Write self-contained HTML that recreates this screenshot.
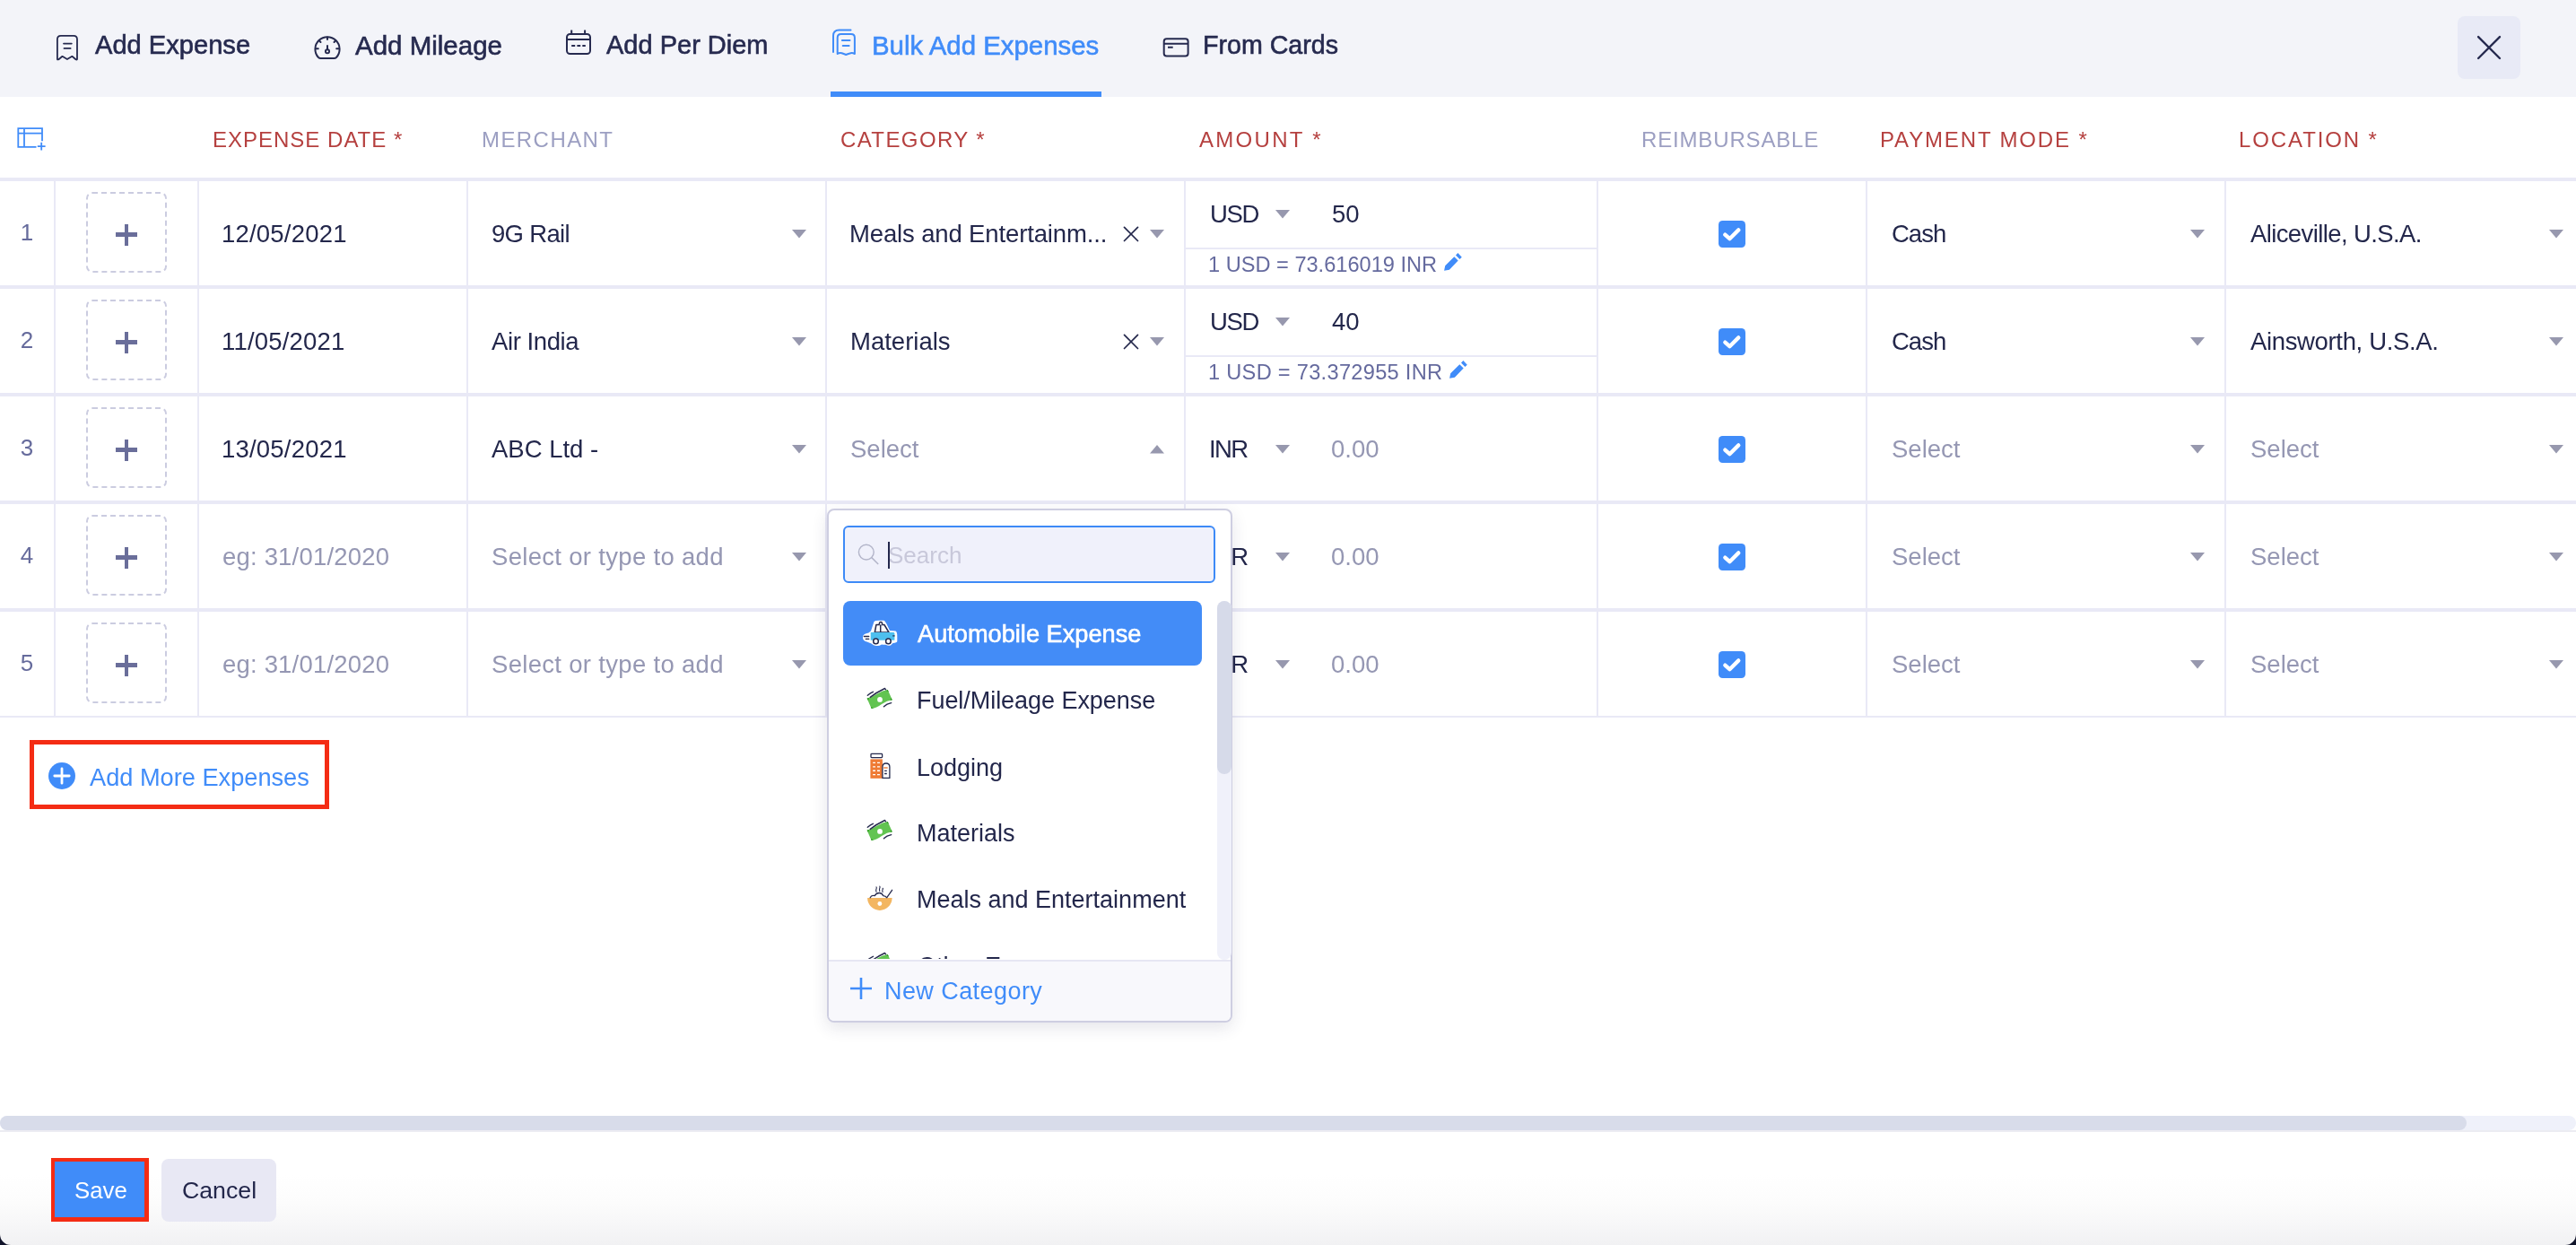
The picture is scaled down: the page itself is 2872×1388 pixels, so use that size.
<!DOCTYPE html>
<html><head><meta charset="utf-8"><title>Bulk Add Expenses</title>
<style>
html,body{margin:0;padding:0;}
body{width:2872px;height:1388px;position:relative;overflow:hidden;background:#fff;font-family:"Liberation Sans", sans-serif;}
.t{position:absolute;white-space:nowrap;line-height:1;will-change:transform;}
.r{position:absolute;box-sizing:content-box;}
</style></head><body>
<div class="r" style="left:0px;top:0px;width:2872px;height:108px;background:#f3f4f9;"></div>
<div class="t" style="left:106px;top:35.86px;font-size:29.1px;color:#262a4f;font-weight:400;letter-spacing:0px;-webkit-text-stroke:0.6px #262a4f;">Add Expense</div>
<svg class="r" style="left:50px;top:30px" width="50" height="45" viewBox="0 0 50 45"><path d="M13.9 36 V13.8 Q13.9 9.8 17.9 9.8 H32 Q36 9.8 36 13.8 V36 Q35.5 36.8 34.5 36.2 L30.4 32.8 L24.9 36 L19.5 32.8 L15.4 36.2 Q14.3 36.8 13.9 36 Z" fill="none" stroke="#262a4f" stroke-width="1.8" stroke-linejoin="round"/><path d="M21 18.6 H29.8 M21.5 23.9 H28.6" stroke="#262a4f" stroke-width="1.8" stroke-linecap="round"/></svg>
<div class="t" style="left:396px;top:35.52px;font-size:29.5px;color:#262a4f;font-weight:400;letter-spacing:0px;-webkit-text-stroke:0.6px #262a4f;">Add Mileage</div>
<svg class="r" style="left:350px;top:39px" width="30" height="28" viewBox="0 0 30 28"><path d="M7.5 26 Q6 26 5 25 A13.6 13.6 0 1 1 25 25 Q24 26 22.5 26 Z" fill="none" stroke="#262a4f" stroke-width="2" stroke-linejoin="round"/><path d="M15 2.5 V5 M2 15.2 H4.8 M25.2 15.2 H28 M5.8 6.3 L7.5 8 M24.2 6.3 L22.5 8 M15 12 V16.3" stroke="#262a4f" stroke-width="2" stroke-linecap="round"/><circle cx="15" cy="18.3" r="2.1" fill="none" stroke="#262a4f" stroke-width="1.9"/></svg>
<div class="t" style="left:676px;top:35.95px;font-size:29.0px;color:#262a4f;font-weight:400;letter-spacing:0px;-webkit-text-stroke:0.6px #262a4f;">Add Per Diem</div>
<svg class="r" style="left:631px;top:33px" width="28" height="28" viewBox="0 0 28 28"><rect x="1" y="5" width="26" height="22" rx="3.5" fill="none" stroke="#262a4f" stroke-width="2"/><path d="M1 11 H27 M6.2 0.5 V5 M21.1 0.5 V5 M6.2 18 H10.2 M12.4 18 H16.2 M18.3 18 H21.8" stroke="#262a4f" stroke-width="2"/></svg>
<div class="t" style="left:972px;top:35.61px;font-size:29.4px;color:#408cf9;font-weight:400;letter-spacing:0px;-webkit-text-stroke:0.6px #408cf9;">Bulk Add Expenses</div>
<svg class="r" style="left:926px;top:31px" width="30" height="32" viewBox="0 0 30 32"><path d="M3 27 V9 Q3 2.5 9.5 2.5 H22.5" fill="none" stroke="#408cf9" stroke-width="2" stroke-linecap="round"/><path d="M7.7 29 V11 Q7.7 7 11.7 7 H22.9 Q26.9 7 26.9 11 V29 Q24 27.5 21.5 28.5 Q19 29.3 17.2 30 Q14.5 29 12.5 28.2 Q10 27.5 7.7 29 Z" fill="none" stroke="#408cf9" stroke-width="2" stroke-linejoin="round"/><path d="M12.9 14 H21.5 M13.7 20.1 H20.6" stroke="#408cf9" stroke-width="2" stroke-linecap="round"/></svg>
<div class="t" style="left:1341px;top:36.28px;font-size:28.6px;color:#262a4f;font-weight:400;letter-spacing:0px;-webkit-text-stroke:0.6px #262a4f;">From Cards</div>
<svg class="r" style="left:1296px;top:42px" width="30" height="22" viewBox="0 0 30 22"><rect x="1.7" y="1.3" width="26.9" height="19.2" rx="3" fill="none" stroke="#262a4f" stroke-width="2"/><path d="M1.7 6.7 H28.6 M6 10.7 H11.7" stroke="#262a4f" stroke-width="2"/></svg>
<div class="r" style="left:926px;top:102px;width:302px;height:6px;background:#408cf9;"></div>
<div class="r" style="left:2740px;top:18px;width:70px;height:70px;background:#e8eaf6;border-radius:8px;"></div>
<svg class="r" style="left:2759px;top:38px" width="32" height="32" viewBox="0 0 32 32"><path d="M4.1 3.1 L28 27 M28 3.1 L4.1 27" stroke="#262a4f" stroke-width="2.4" stroke-linecap="round"/></svg>
<div class="t" style="left:237px;top:143.68px;font-size:24px;color:#b5403f;font-weight:400;letter-spacing:1.0px;">EXPENSE DATE *</div>
<div class="t" style="left:537px;top:143.68px;font-size:24px;color:#9c9fc2;font-weight:400;letter-spacing:1.43px;">MERCHANT</div>
<div class="t" style="left:937px;top:143.68px;font-size:24px;color:#b5403f;font-weight:400;letter-spacing:1.4px;">CATEGORY *</div>
<div class="t" style="left:1337px;top:143.68px;font-size:24px;color:#b5403f;font-weight:400;letter-spacing:2.29px;">AMOUNT *</div>
<div class="t" style="left:1830px;top:143.68px;font-size:24px;color:#9c9fc2;font-weight:400;letter-spacing:0.84px;">REIMBURSABLE</div>
<div class="t" style="left:2096px;top:143.68px;font-size:24px;color:#b5403f;font-weight:400;letter-spacing:1.85px;">PAYMENT MODE *</div>
<div class="t" style="left:2496px;top:143.68px;font-size:24px;color:#b5403f;font-weight:400;letter-spacing:1.89px;">LOCATION *</div>
<svg class="r" style="left:10px;top:135px" width="50" height="40" viewBox="0 0 50 40"><path d="M29.6 28.8 H10.3 V8.2 H37 V21.4 M10.3 13.7 H37 M17 8.2 V28.8" fill="none" stroke="#408cf9" stroke-width="1.8" stroke-linecap="square"/><path d="M36.2 24.6 V31.6 M32.7 28.1 H39.7" stroke="#408cf9" stroke-width="1.8" stroke-linecap="square"/></svg>
<div class="r" style="left:0px;top:198px;width:2872px;height:4px;background:#e9e9f6;"></div>
<div class="r" style="left:0px;top:318px;width:2872px;height:4px;background:#e9e9f6;"></div>
<div class="r" style="left:0px;top:438px;width:2872px;height:4px;background:#e9e9f6;"></div>
<div class="r" style="left:0px;top:558px;width:2872px;height:4px;background:#e9e9f6;"></div>
<div class="r" style="left:0px;top:678px;width:2872px;height:4px;background:#e9e9f6;"></div>
<div class="r" style="left:0px;top:798px;width:2872px;height:2px;background:#e9e9f6;"></div>
<div class="r" style="left:60px;top:202px;width:2px;height:596px;background:#e9e9f6;"></div>
<div class="r" style="left:220px;top:202px;width:2px;height:596px;background:#e9e9f6;"></div>
<div class="r" style="left:520px;top:202px;width:2px;height:596px;background:#e9e9f6;"></div>
<div class="r" style="left:920px;top:202px;width:2px;height:596px;background:#e9e9f6;"></div>
<div class="r" style="left:1320px;top:202px;width:2px;height:596px;background:#e9e9f6;"></div>
<div class="r" style="left:1780px;top:202px;width:2px;height:596px;background:#e9e9f6;"></div>
<div class="r" style="left:2080px;top:202px;width:2px;height:596px;background:#e9e9f6;"></div>
<div class="r" style="left:2480px;top:202px;width:2px;height:596px;background:#e9e9f6;"></div>
<div class="t" style="left:0px;width:60px;text-align:center;top:245.99px;font-size:26px;color:#666b9c;">1</div>
<div class="r" style="left:96px;top:214px;width:86px;height:86px;border:2px dashed #cbcce0;border-radius:7px;"></div>
<div class="r" style="left:129px;top:259px;width:24px;height:4.6px;background:#6a6e9a;"></div>
<div class="r" style="left:139px;top:249.5px;width:4.2px;height:24px;background:#6a6e9a;"></div>
<div class="t" style="left:247px;top:246.72px;font-size:27.5px;color:#23274b;font-weight:400;letter-spacing:0.2px;">12/05/2021</div>
<div class="t" style="left:548px;top:246.72px;font-size:27.5px;color:#23274b;font-weight:400;letter-spacing:-0.7px;">9G Rail</div>
<svg class="r" style="left:883px;top:256px" width="16" height="10" viewBox="0 0 16 10"><path d="M0 0 L16 0 L8 9.5 Z" fill="#9798ae"/></svg>
<div class="r" style="left:1916px;top:246px;width:30px;height:30px;background:#408cf9;border-radius:4.5px;"></div>
<svg class="r" style="left:1916px;top:246px" width="30" height="30" viewBox="0 0 30 30"><path d="M7.3 15.6 L12.4 20.2 L22.3 10.4" fill="none" stroke="#fff" stroke-width="4.3" stroke-linecap="round" stroke-linejoin="round"/></svg>
<svg class="r" style="left:2442px;top:256px" width="16" height="10" viewBox="0 0 16 10"><path d="M0 0 L16 0 L8 9.5 Z" fill="#9798ae"/></svg>
<svg class="r" style="left:2842px;top:256px" width="16" height="10" viewBox="0 0 16 10"><path d="M0 0 L16 0 L8 9.5 Z" fill="#9798ae"/></svg>
<div class="t" style="left:2109px;top:246.72px;font-size:27.5px;color:#23274b;font-weight:400;letter-spacing:-1.0px;">Cash</div>
<div class="t" style="left:2509px;top:246.72px;font-size:27.5px;color:#23274b;font-weight:400;letter-spacing:-0.61px;">Aliceville, U.S.A.</div>
<div class="t" style="left:1348.5px;top:224.72px;font-size:27.5px;color:#23274b;font-weight:400;letter-spacing:-1.3px;">USD</div>
<svg class="r" style="left:1422px;top:234px" width="16" height="10" viewBox="0 0 16 10"><path d="M0 0 L16 0 L8 9.5 Z" fill="#9798ae"/></svg>
<div class="t" style="left:1485px;top:224.72px;font-size:27.5px;color:#23274b;font-weight:400;letter-spacing:0px;">50</div>
<div class="r" style="left:1322px;top:276px;width:458px;height:2px;background:#e9e9f6;"></div>
<div class="t" style="left:1347px;top:284.02px;font-size:23.6px;color:#656a9e;font-weight:400;letter-spacing:0px;">1 USD = 73.616019 INR</div>
<svg class="r" style="left:1600px;top:275px" width="40" height="35" viewBox="0 0 40 35"><path d="M11.2 21.2 L21.3 11.2 L25.7 15.6 L15.9 25.7 L10.1 26.7 Z M23 9.4 L25.4 7 L29.8 11.7 L27.4 14 Z" fill="#408cf9"/></svg>
<div class="t" style="left:0px;width:60px;text-align:center;top:365.99px;font-size:26px;color:#666b9c;">2</div>
<div class="r" style="left:96px;top:334px;width:86px;height:86px;border:2px dashed #cbcce0;border-radius:7px;"></div>
<div class="r" style="left:129px;top:379px;width:24px;height:4.6px;background:#6a6e9a;"></div>
<div class="r" style="left:139px;top:369.5px;width:4.2px;height:24px;background:#6a6e9a;"></div>
<div class="t" style="left:247px;top:366.72px;font-size:27.5px;color:#23274b;font-weight:400;letter-spacing:0.2px;">11/05/2021</div>
<div class="t" style="left:548px;top:366.72px;font-size:27.5px;color:#23274b;font-weight:400;letter-spacing:-0.41px;">Air India</div>
<svg class="r" style="left:883px;top:376px" width="16" height="10" viewBox="0 0 16 10"><path d="M0 0 L16 0 L8 9.5 Z" fill="#9798ae"/></svg>
<div class="r" style="left:1916px;top:366px;width:30px;height:30px;background:#408cf9;border-radius:4.5px;"></div>
<svg class="r" style="left:1916px;top:366px" width="30" height="30" viewBox="0 0 30 30"><path d="M7.3 15.6 L12.4 20.2 L22.3 10.4" fill="none" stroke="#fff" stroke-width="4.3" stroke-linecap="round" stroke-linejoin="round"/></svg>
<svg class="r" style="left:2442px;top:376px" width="16" height="10" viewBox="0 0 16 10"><path d="M0 0 L16 0 L8 9.5 Z" fill="#9798ae"/></svg>
<svg class="r" style="left:2842px;top:376px" width="16" height="10" viewBox="0 0 16 10"><path d="M0 0 L16 0 L8 9.5 Z" fill="#9798ae"/></svg>
<div class="t" style="left:2109px;top:366.72px;font-size:27.5px;color:#23274b;font-weight:400;letter-spacing:-1.0px;">Cash</div>
<div class="t" style="left:2509px;top:366.72px;font-size:27.5px;color:#23274b;font-weight:400;letter-spacing:-0.35px;">Ainsworth, U.S.A.</div>
<div class="t" style="left:1348.5px;top:344.72px;font-size:27.5px;color:#23274b;font-weight:400;letter-spacing:-1.3px;">USD</div>
<svg class="r" style="left:1422px;top:354px" width="16" height="10" viewBox="0 0 16 10"><path d="M0 0 L16 0 L8 9.5 Z" fill="#9798ae"/></svg>
<div class="t" style="left:1485px;top:344.72px;font-size:27.5px;color:#23274b;font-weight:400;letter-spacing:0px;">40</div>
<div class="r" style="left:1322px;top:396px;width:458px;height:2px;background:#e9e9f6;"></div>
<div class="t" style="left:1347px;top:404.02px;font-size:23.6px;color:#656a9e;font-weight:400;letter-spacing:0.3px;">1 USD = 73.372955 INR</div>
<svg class="r" style="left:1605.5px;top:395px" width="40" height="35" viewBox="0 0 40 35"><path d="M11.2 21.2 L21.3 11.2 L25.7 15.6 L15.9 25.7 L10.1 26.7 Z M23 9.4 L25.4 7 L29.8 11.7 L27.4 14 Z" fill="#408cf9"/></svg>
<div class="t" style="left:0px;width:60px;text-align:center;top:485.99px;font-size:26px;color:#666b9c;">3</div>
<div class="r" style="left:96px;top:454px;width:86px;height:86px;border:2px dashed #cbcce0;border-radius:7px;"></div>
<div class="r" style="left:129px;top:499px;width:24px;height:4.6px;background:#6a6e9a;"></div>
<div class="r" style="left:139px;top:489.5px;width:4.2px;height:24px;background:#6a6e9a;"></div>
<div class="t" style="left:247px;top:486.72px;font-size:27.5px;color:#23274b;font-weight:400;letter-spacing:0.2px;">13/05/2021</div>
<div class="t" style="left:548px;top:486.72px;font-size:27.5px;color:#23274b;font-weight:400;letter-spacing:0px;">ABC Ltd -</div>
<svg class="r" style="left:883px;top:496px" width="16" height="10" viewBox="0 0 16 10"><path d="M0 0 L16 0 L8 9.5 Z" fill="#9798ae"/></svg>
<div class="r" style="left:1916px;top:486px;width:30px;height:30px;background:#408cf9;border-radius:4.5px;"></div>
<svg class="r" style="left:1916px;top:486px" width="30" height="30" viewBox="0 0 30 30"><path d="M7.3 15.6 L12.4 20.2 L22.3 10.4" fill="none" stroke="#fff" stroke-width="4.3" stroke-linecap="round" stroke-linejoin="round"/></svg>
<svg class="r" style="left:2442px;top:496px" width="16" height="10" viewBox="0 0 16 10"><path d="M0 0 L16 0 L8 9.5 Z" fill="#9798ae"/></svg>
<svg class="r" style="left:2842px;top:496px" width="16" height="10" viewBox="0 0 16 10"><path d="M0 0 L16 0 L8 9.5 Z" fill="#9798ae"/></svg>
<div class="t" style="left:2109px;top:486.72px;font-size:27.5px;color:#9597b3;font-weight:400;letter-spacing:0px;">Select</div>
<div class="t" style="left:2509px;top:486.72px;font-size:27.5px;color:#9597b3;font-weight:400;letter-spacing:0px;">Select</div>
<div class="t" style="left:1347.5px;top:486.72px;font-size:27.5px;color:#23274b;font-weight:400;letter-spacing:-1.6px;">INR</div>
<svg class="r" style="left:1422px;top:496px" width="16" height="10" viewBox="0 0 16 10"><path d="M0 0 L16 0 L8 9.5 Z" fill="#9798ae"/></svg>
<div class="t" style="left:1484px;top:486.72px;font-size:27.5px;color:#9597b3;font-weight:400;letter-spacing:0px;">0.00</div>
<div class="t" style="left:0px;width:60px;text-align:center;top:605.99px;font-size:26px;color:#666b9c;">4</div>
<div class="r" style="left:96px;top:574px;width:86px;height:86px;border:2px dashed #cbcce0;border-radius:7px;"></div>
<div class="r" style="left:129px;top:619px;width:24px;height:4.6px;background:#6a6e9a;"></div>
<div class="r" style="left:139px;top:609.5px;width:4.2px;height:24px;background:#6a6e9a;"></div>
<div class="t" style="left:247.5px;top:606.72px;font-size:27.5px;color:#9597b3;font-weight:400;letter-spacing:0.19px;">eg: 31/01/2020</div>
<div class="t" style="left:548px;top:606.72px;font-size:27.5px;color:#9597b3;font-weight:400;letter-spacing:0.31px;">Select or type to add</div>
<svg class="r" style="left:883px;top:616px" width="16" height="10" viewBox="0 0 16 10"><path d="M0 0 L16 0 L8 9.5 Z" fill="#9798ae"/></svg>
<div class="r" style="left:1916px;top:606px;width:30px;height:30px;background:#408cf9;border-radius:4.5px;"></div>
<svg class="r" style="left:1916px;top:606px" width="30" height="30" viewBox="0 0 30 30"><path d="M7.3 15.6 L12.4 20.2 L22.3 10.4" fill="none" stroke="#fff" stroke-width="4.3" stroke-linecap="round" stroke-linejoin="round"/></svg>
<svg class="r" style="left:2442px;top:616px" width="16" height="10" viewBox="0 0 16 10"><path d="M0 0 L16 0 L8 9.5 Z" fill="#9798ae"/></svg>
<svg class="r" style="left:2842px;top:616px" width="16" height="10" viewBox="0 0 16 10"><path d="M0 0 L16 0 L8 9.5 Z" fill="#9798ae"/></svg>
<div class="t" style="left:2109px;top:606.72px;font-size:27.5px;color:#9597b3;font-weight:400;letter-spacing:0px;">Select</div>
<div class="t" style="left:2509px;top:606.72px;font-size:27.5px;color:#9597b3;font-weight:400;letter-spacing:0px;">Select</div>
<div class="t" style="left:1347.5px;top:606.72px;font-size:27.5px;color:#23274b;font-weight:400;letter-spacing:-1.6px;">INR</div>
<svg class="r" style="left:1422px;top:616px" width="16" height="10" viewBox="0 0 16 10"><path d="M0 0 L16 0 L8 9.5 Z" fill="#9798ae"/></svg>
<div class="t" style="left:1484px;top:606.72px;font-size:27.5px;color:#9597b3;font-weight:400;letter-spacing:0px;">0.00</div>
<div class="t" style="left:0px;width:60px;text-align:center;top:725.99px;font-size:26px;color:#666b9c;">5</div>
<div class="r" style="left:96px;top:694px;width:86px;height:86px;border:2px dashed #cbcce0;border-radius:7px;"></div>
<div class="r" style="left:129px;top:739px;width:24px;height:4.6px;background:#6a6e9a;"></div>
<div class="r" style="left:139px;top:729.5px;width:4.2px;height:24px;background:#6a6e9a;"></div>
<div class="t" style="left:247.5px;top:726.72px;font-size:27.5px;color:#9597b3;font-weight:400;letter-spacing:0.19px;">eg: 31/01/2020</div>
<div class="t" style="left:548px;top:726.72px;font-size:27.5px;color:#9597b3;font-weight:400;letter-spacing:0.31px;">Select or type to add</div>
<svg class="r" style="left:883px;top:736px" width="16" height="10" viewBox="0 0 16 10"><path d="M0 0 L16 0 L8 9.5 Z" fill="#9798ae"/></svg>
<div class="r" style="left:1916px;top:726px;width:30px;height:30px;background:#408cf9;border-radius:4.5px;"></div>
<svg class="r" style="left:1916px;top:726px" width="30" height="30" viewBox="0 0 30 30"><path d="M7.3 15.6 L12.4 20.2 L22.3 10.4" fill="none" stroke="#fff" stroke-width="4.3" stroke-linecap="round" stroke-linejoin="round"/></svg>
<svg class="r" style="left:2442px;top:736px" width="16" height="10" viewBox="0 0 16 10"><path d="M0 0 L16 0 L8 9.5 Z" fill="#9798ae"/></svg>
<svg class="r" style="left:2842px;top:736px" width="16" height="10" viewBox="0 0 16 10"><path d="M0 0 L16 0 L8 9.5 Z" fill="#9798ae"/></svg>
<div class="t" style="left:2109px;top:726.72px;font-size:27.5px;color:#9597b3;font-weight:400;letter-spacing:0px;">Select</div>
<div class="t" style="left:2509px;top:726.72px;font-size:27.5px;color:#9597b3;font-weight:400;letter-spacing:0px;">Select</div>
<div class="t" style="left:1347.5px;top:726.72px;font-size:27.5px;color:#23274b;font-weight:400;letter-spacing:-1.6px;">INR</div>
<svg class="r" style="left:1422px;top:736px" width="16" height="10" viewBox="0 0 16 10"><path d="M0 0 L16 0 L8 9.5 Z" fill="#9798ae"/></svg>
<div class="t" style="left:1484px;top:726.72px;font-size:27.5px;color:#9597b3;font-weight:400;letter-spacing:0px;">0.00</div>
<div class="t" style="left:947px;top:246.72px;font-size:27.5px;color:#23274b;font-weight:400;letter-spacing:-0.14px;">Meals and Entertainm...</div>
<svg class="r" style="left:1252px;top:252px" width="18" height="18" viewBox="0 0 18 18"><path d="M1.5 1.4 L16.5 16.5 M16.5 1.4 L1.5 16.5" stroke="#23274b" stroke-width="1.7" stroke-linecap="round"/></svg>
<svg class="r" style="left:1282px;top:256px" width="16" height="10" viewBox="0 0 16 10"><path d="M0 0 L16 0 L8 9.5 Z" fill="#9798ae"/></svg>
<div class="t" style="left:948px;top:366.72px;font-size:27.5px;color:#23274b;font-weight:400;letter-spacing:0px;">Materials</div>
<svg class="r" style="left:1252px;top:372px" width="18" height="18" viewBox="0 0 18 18"><path d="M1.5 1.4 L16.5 16.5 M16.5 1.4 L1.5 16.5" stroke="#23274b" stroke-width="1.7" stroke-linecap="round"/></svg>
<svg class="r" style="left:1282px;top:376px" width="16" height="10" viewBox="0 0 16 10"><path d="M0 0 L16 0 L8 9.5 Z" fill="#9798ae"/></svg>
<div class="t" style="left:948px;top:486.72px;font-size:27.5px;color:#9597b3;font-weight:400;letter-spacing:0px;">Select</div>
<svg class="r" style="left:1282px;top:496px" width="16" height="10" viewBox="0 0 16 10"><path d="M0 9.5 L8 0 L16 9.5 Z" fill="#9798ae"/></svg>
<div class="r" style="left:33px;top:825px;width:324px;height:67px;border:5px solid #f42c14;"></div>
<svg class="r" style="left:54px;top:850px" width="30" height="30" viewBox="0 0 30 30"><circle cx="15" cy="15" r="15" fill="#408cf9"/><path d="M15 6.8 V23.2 M6.8 15 H23.2" stroke="#fff" stroke-width="2.8" stroke-linecap="round"/></svg>
<div class="t" style="left:100px;top:852.97px;font-size:27.2px;color:#408cf9;font-weight:400;letter-spacing:0px;">Add More Expenses</div>
<div class="r" style="left:0px;top:1244px;width:2872px;height:16px;background:#eff1fa;border-radius:8px;"></div>
<div class="r" style="left:0px;top:1244px;width:2750px;height:16px;background:#d8dcea;border-radius:8px;"></div>
<div class="r" style="left:0px;top:1260px;width:2872px;height:2px;background:#ececf2;"></div>
<div class="r" style="left:0px;top:1310px;width:2872px;height:78px;background:linear-gradient(#ffffff 0%,#fcfcfc 40%,#f7f7f8 70%,#f1f1f3 100%);"></div>
<div class="r" style="left:57px;top:1291px;width:109px;height:71px;background:#f42c14;"></div>
<div class="r" style="left:61px;top:1295px;width:100px;height:62px;background:#408cf9;"></div>
<div class="t" style="left:83px;top:1314.86px;font-size:25.8px;color:#ffffff;font-weight:400;letter-spacing:0px;">Save</div>
<div class="r" style="left:180px;top:1292px;width:128px;height:70px;background:#e8e8f4;border-radius:8px;"></div>
<div class="t" style="left:203px;top:1314.09px;font-size:26.7px;color:#23274b;font-weight:400;letter-spacing:0px;">Cancel</div>
<svg class="r" style="left:0px;top:1376px" width="12" height="12" viewBox="0 0 12 12"><path d="M0 0 A12 12 0 0 0 12 12 H0 Z" fill="#11142a"/></svg>
<svg class="r" style="left:2860px;top:1376px" width="12" height="12" viewBox="0 0 12 12"><path d="M12 0 A12 12 0 0 1 0 12 H12 Z" fill="#11142a"/></svg>
<div class="r" style="left:922px;top:567px;width:448px;height:569px;background:#fff;border:2px solid #cecee1;border-radius:8px;box-shadow:0 6px 18px rgba(40,40,80,0.12);overflow:hidden;"><div style="position:absolute;left:0;top:501px;width:448px;height:68px;background:#f8f8fc;border-top:2px solid #e6e6f3;"></div></div>
<div class="r" style="left:940px;top:586px;width:411px;height:60px;background:#f0f1fb;border:2px solid #3d8af7;border-radius:6px;"></div>
<svg class="r" style="left:956px;top:606px" width="26" height="26" viewBox="0 0 26 26"><circle cx="9.8" cy="9.6" r="8.4" fill="none" stroke="#b3b5c9" stroke-width="1.4"/><path d="M15.8 15.6 L23.2 23" stroke="#b3b5c9" stroke-width="1.5"/></svg>
<div class="t" style="left:990px;top:605.99px;font-size:26px;color:#c8c8da;font-weight:400;letter-spacing:0px;">Search</div>
<div class="r" style="left:990px;top:604px;width:2px;height:30px;background:#23274b;"></div>
<div class="r" style="left:940px;top:670px;width:400px;height:72px;background:#438cf7;border-radius:8px;"></div>
<div class="r" style="left:1357px;top:670px;width:16px;height:400px;background:#f0f1fa;border-radius:8px;"></div>
<div class="r" style="left:1357px;top:670px;width:16px;height:193px;background:#d6dae9;border-radius:8px;"></div>
<div class="t" style="left:1023px;top:692.97px;font-size:27.2px;color:#ffffff;font-weight:400;letter-spacing:0px;-webkit-text-stroke:0.6px #fff;">Automobile Expense</div>
<div class="t" style="left:1022px;top:768.14px;font-size:27px;color:#23274b;font-weight:400;letter-spacing:-0.05px;">Fuel/Mileage Expense</div>
<div class="t" style="left:1022px;top:843.14px;font-size:27px;color:#23274b;font-weight:400;letter-spacing:0px;">Lodging</div>
<div class="t" style="left:1022px;top:916.14px;font-size:27px;color:#23274b;font-weight:400;letter-spacing:0px;">Materials</div>
<div class="t" style="left:1022px;top:990.14px;font-size:27px;color:#23274b;font-weight:400;letter-spacing:0px;">Meals and Entertainment</div>
<div class="r" style="left:940px;top:1040px;width:400px;height:29px;overflow:hidden;"><div class="t" style="left:83px;top:24.14px;font-size:27px;color:#23274b;">Other Expenses</div></div>
<svg class="r" style="left:950px;top:680px" width="60" height="50" viewBox="0 0 60 50"><path d="M12 29.5 Q12.5 26.5 18.5 25.5 L21 23.5 L24.5 13 Q25.5 11.8 30 11.8 H35.5 Q37 12 42 23 L48.5 23.5 Q50.5 24.5 50.3 30 V35 Q50 36.5 45.5 37 L43 39.5 Q40 40.5 37.5 38.8 Q35 39 33 38.5 Q30 40.5 27 40 Q23.5 39.5 21.5 37.5 L16.5 35.5 Q12.5 34.5 12 31.5 Z" fill="#fff"/><path d="M25.3 25 L26.9 16.5 H35.9 L41 25 Z" fill="#fff" stroke="#262a4d" stroke-width="1.5" stroke-linejoin="round"/><path d="M31.7 16.5 V25" stroke="#262a4d" stroke-width="1.5"/><path d="M30.1 16.5 L30.6 14.2 Q30.9 13.5 32 13.5 Q33.1 13.5 33.3 14.2 L33.7 16.5" fill="#fff" stroke="#262a4d" stroke-width="1.4"/><path d="M20.7 25.1 H46.3 Q47.4 25.3 47.4 26.5 V33.7 H20.7 Z" fill="#4dbfee"/><path d="M45.2 28.9 H47.6" stroke="#262a4d" stroke-width="1.2"/><circle cx="26.5" cy="34.9" r="2.8" fill="#fff" stroke="#262a4d" stroke-width="1.5"/><circle cx="40.4" cy="34.9" r="2.8" fill="#fff" stroke="#262a4d" stroke-width="1.5"/><path d="M13.3 29.5 H18.7 M15.3 32.4 H18.7" stroke="#262a4d" stroke-width="1.3" stroke-linecap="round"/></svg>
<svg class="r" style="left:955px;top:755px" width="50" height="45" viewBox="0 0 50 45"><path d="M11.6 23.5 Q17 22.5 23 18.5 Q29 14.5 34.7 13.9 L39.8 25.3 Q34 26 28 30 Q22 34.5 16.6 35.1 Z" fill="#62c451"/><path d="M11.6 23.5 L14 23 L13 26 Z M34.7 13.9 L33 15 L36 16.5 Z M39.8 25.3 L37.5 26 L38.5 23 Z M16.6 35.1 L16 33 L19 34.5 Z" fill="#2f9a22"/><circle cx="26" cy="24.9" r="2.9" fill="#fff"/><path d="M15.2 22.4 Q22 17 31.5 12.5 L32.5 13.7" fill="none" stroke="#262a4d" stroke-width="1.4" stroke-linecap="round"/><path d="M12.3 20.2 Q15.5 17.5 18.4 16.3" fill="none" stroke="#262a4d" stroke-width="1.4" stroke-linecap="round"/><path d="M30.4 32.7 Q33.5 29.5 38.7 28.6" fill="none" stroke="#262a4d" stroke-width="1.4" stroke-linecap="round"/></svg>
<svg class="r" style="left:955px;top:830px" width="50" height="45" viewBox="0 0 50 45"><rect x="16" y="10.4" width="12.6" height="4.2" rx="0.8" fill="#fff" stroke="#262a4d" stroke-width="1.3"/><rect x="15.4" y="16.4" width="13.5" height="21.4" fill="#ef7b35"/><path d="M18.1 20.4 H21 M23 20.4 H26 M18.1 24.9 H21 M23 24.9 H26 M18.1 29.3 H21 M23 29.3 H26 M18.1 33.6 H21 M23 33.6 H26" stroke="#fff" stroke-width="1.4"/><path d="M28.9 37.4 V25 Q28.9 21 32.9 21 Q36.9 21 36.9 25 V37.4 Z" fill="#fff" stroke="#262a4d" stroke-width="1.3" stroke-linejoin="round"/><path d="M30.2 26 H34.7" stroke="#ef7b35" stroke-width="1.4"/><path d="M31.1 29.3 H33.8 M31.1 32.5 H33.8" stroke="#262a4d" stroke-width="1.3"/></svg>
<svg class="r" style="left:955px;top:902px" width="50" height="45" viewBox="0 0 50 45"><path d="M11.6 23.5 Q17 22.5 23 18.5 Q29 14.5 34.7 13.9 L39.8 25.3 Q34 26 28 30 Q22 34.5 16.6 35.1 Z" fill="#62c451"/><path d="M11.6 23.5 L14 23 L13 26 Z M34.7 13.9 L33 15 L36 16.5 Z M39.8 25.3 L37.5 26 L38.5 23 Z M16.6 35.1 L16 33 L19 34.5 Z" fill="#2f9a22"/><circle cx="26" cy="24.9" r="2.9" fill="#fff"/><path d="M15.2 22.4 Q22 17 31.5 12.5 L32.5 13.7" fill="none" stroke="#262a4d" stroke-width="1.4" stroke-linecap="round"/><path d="M12.3 20.2 Q15.5 17.5 18.4 16.3" fill="none" stroke="#262a4d" stroke-width="1.4" stroke-linecap="round"/><path d="M30.4 32.7 Q33.5 29.5 38.7 28.6" fill="none" stroke="#262a4d" stroke-width="1.4" stroke-linecap="round"/></svg>
<svg class="r" style="left:955px;top:978px" width="50" height="45" viewBox="0 0 50 45"><path d="M12.1 23.1 H39.6 A13.75 13.8 0 0 1 12.1 23.1 Z" fill="#f3b661"/><circle cx="25.85" cy="29.5" r="2.4" fill="#fff"/><path d="M15.2 22.8 Q16.5 19.5 20.2 20.6 Q22 17.5 25.3 17.5 Q28.5 17.5 29.6 20.6 Q32.5 20.8 33.6 22.8 L39.6 14.3" fill="none" stroke="#262a4d" stroke-width="1.3" stroke-linejoin="round" stroke-linecap="round"/><path d="M22 16.3 Q21.3 14.5 22 13 Q22.7 11.5 22 10.8 M25.8 15.5 Q25.1 13.5 25.8 12 Q26.5 10.8 25.8 10.1 M29.1 16.6 Q28.4 15 29.1 13.5 Q29.8 12.6 29.1 12.3" fill="none" stroke="#262a4d" stroke-width="1.1" stroke-linecap="round"/></svg>
<div class="r" style="left:940px;top:1040px;width:60px;height:29px;overflow:hidden;">
<svg class="r" style="left:15px;top:10px" width="50" height="45" viewBox="0 0 50 45"><path d="M11.6 23.5 Q17 22.5 23 18.5 Q29 14.5 34.7 13.9 L39.8 25.3 Q34 26 28 30 Q22 34.5 16.6 35.1 Z" fill="#62c451"/><path d="M11.6 23.5 L14 23 L13 26 Z M34.7 13.9 L33 15 L36 16.5 Z M39.8 25.3 L37.5 26 L38.5 23 Z M16.6 35.1 L16 33 L19 34.5 Z" fill="#2f9a22"/><circle cx="26" cy="24.9" r="2.9" fill="#fff"/><path d="M15.2 22.4 Q22 17 31.5 12.5 L32.5 13.7" fill="none" stroke="#262a4d" stroke-width="1.4" stroke-linecap="round"/><path d="M12.3 20.2 Q15.5 17.5 18.4 16.3" fill="none" stroke="#262a4d" stroke-width="1.4" stroke-linecap="round"/><path d="M30.4 32.7 Q33.5 29.5 38.7 28.6" fill="none" stroke="#262a4d" stroke-width="1.4" stroke-linecap="round"/></svg>
</div>
<svg class="r" style="left:948px;top:1090px" width="24" height="24" viewBox="0 0 24 24"><path d="M12 0 V24 M0 12 H24" stroke="#408cf9" stroke-width="2.6"/></svg>
<div class="t" style="left:986px;top:1092.14px;font-size:27px;color:#408cf9;font-weight:400;letter-spacing:0.43px;">New Category</div>
</body></html>
